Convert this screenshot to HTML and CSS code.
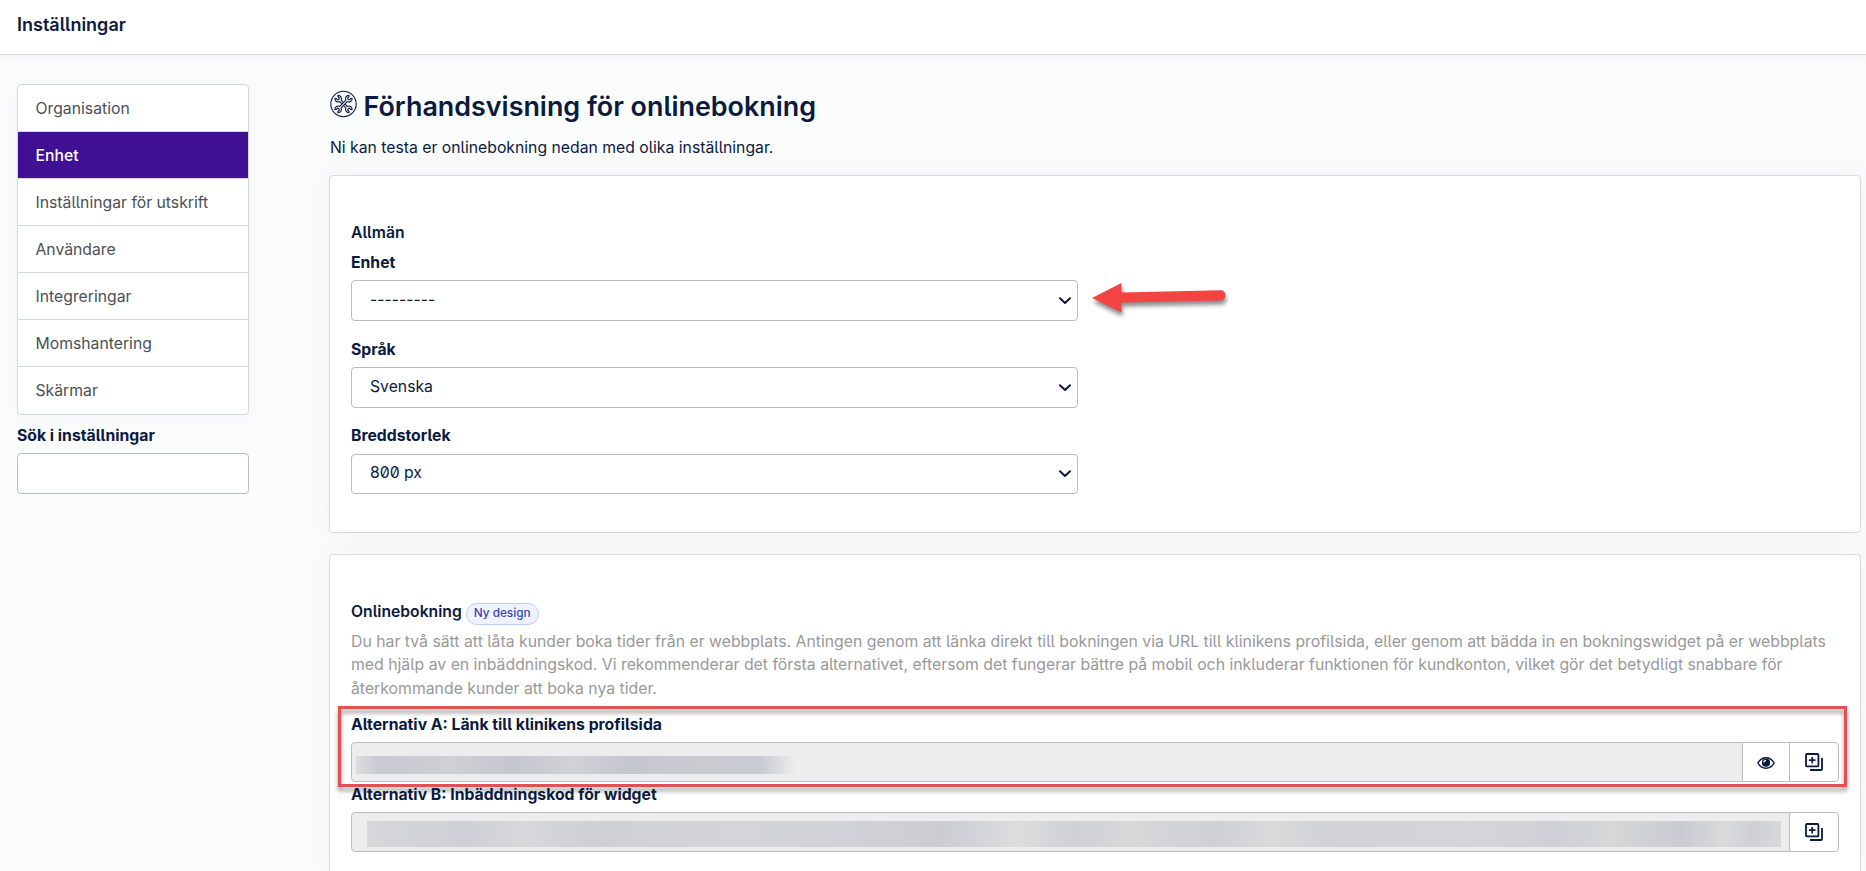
FILE: index.html
```html
<!DOCTYPE html>
<html lang="sv">
<head>
<meta charset="utf-8">
<title>Inställningar</title>
<link rel="stylesheet" href="styles.css">
</head>
<body>
<svg class="defs" aria-hidden="true">
  <symbol id="chevron" viewBox="0 0 12 8"><path d="M1 1.2 6 6 11 1.2" fill="none" stroke="currentColor" stroke-width="2" stroke-linecap="round" stroke-linejoin="round"/></symbol>
  <symbol id="copy" viewBox="0 0 18 18"><rect x="1" y="1" width="12.4" height="12.4" rx="1" fill="none" stroke="currentColor" stroke-width="1.8"/><path d="M7.2 3.9v6.6M3.900 7.200h6.600" stroke="currentColor" stroke-width="1.7" fill="none"/><path d="M17 5v11a1 1 0 0 1-1 1H5" fill="none" stroke="currentColor" stroke-width="1.8"/></symbol>
  <symbol id="eye" viewBox="0 0 18 12"><path d="M9 .8C5.200.8 2.500 3 .9 6c1.600 3 4.300 5.200 8.100 5.200S15.500 9 17.100 6C15.500 3 12.800.8 9 .8Z" fill="#fff" stroke="currentColor" stroke-width="1.500"/><circle cx="9" cy="5.700" r="4.100" fill="currentColor"/><path d="M6.900 5.500A2.100 2.100 0 0 1 9 3.400" fill="none" stroke="#fff" stroke-width="1.100"/></symbol>
  <symbol id="tools" viewBox="-13.5 -13.5 27 27">
    <g stroke="currentColor" stroke-width="1.1" stroke-linejoin="round" fill="#fbfcfc">
      <circle r="12.700"/>
      <path transform="rotate(45)" d="M-4.400-1H4.400A3.300 3.300 0 0 1 10-2.200L9.200-1.300H7.200L6.500 0 7.200 1.300H9.200L10 2.200A3.300 3.300 0 0 1 4.400 1H-4.400A3.300 3.300 0 0 1-10 2.200L-9.200 1.300H-7.200L-6.500 0-7.200-1.300H-9.200L-10-2.200A3.300 3.300 0 0 1-4.400-1Z"/>
      <path transform="rotate(-45)" d="M-4.400-1H4.400A3.300 3.300 0 0 1 10-2.200L9.200-1.300H7.200L6.500 0 7.200 1.300H9.200L10 2.200A3.300 3.300 0 0 1 4.400 1H-4.400A3.300 3.300 0 0 1-10 2.200L-9.200 1.300H-7.200L-6.500 0-7.200-1.300H-9.200L-10-2.200A3.300 3.300 0 0 1-4.400-1Z"/>
    </g>
  </symbol>
</svg>

<header class="topbar"><h1>Inställningar</h1></header>

<div class="layout">
  <aside class="sidebar">
    <nav class="menu">
      <a>Organisation</a>
      <a class="active">Enhet</a>
      <a>Inställningar för utskrift</a>
      <a>Användare</a>
      <a>Integreringar</a>
      <a>Momshantering</a>
      <a>Skärmar</a>
    </nav>
    <label class="label" for="search">Sök i inställningar</label>
    <input class="search" id="search" type="text">
  </aside>

  <main class="main">
    <h2 class="title"><svg class="title-icon"><use href="#tools"/></svg><span>Förhandsvisning för onlinebokning</span></h2>
    <p class="lead">Ni kan testa er onlinebokning nedan med olika inställningar.</p>

    <section class="card general">
      <h3 class="heading">Allmän</h3>
      <div class="field">
        <div class="label">Enhet</div>
        <div class="select"><span>---------</span><svg class="chevron"><use href="#chevron"/></svg>
          <svg class="arrow" viewBox="0 0 146 44"><path d="M4 18 33.500 3v9.600L132.500 10.200a5.100 5.100 0 0 1 0 10.200L33.500 22.600v9.900Z"/></svg>
        </div>
      </div>
      <div class="field">
        <div class="label">Språk</div>
        <div class="select"><span>Svenska</span><svg class="chevron"><use href="#chevron"/></svg></div>
      </div>
      <div class="field">
        <div class="label">Breddstorlek</div>
        <div class="select last"><span>800 px</span><svg class="chevron"><use href="#chevron"/></svg></div>
      </div>
    </section>

    <section class="card booking">
      <h3 class="heading booking-heading"><span>Onlinebokning</span><span class="badge">Ny design</span></h3>
      <p class="help">Du har två sätt att låta kunder boka tider från er webbplats. Antingen genom att länka direkt till bokningen via URL till klinikens profilsida, eller genom att bädda in en bokningswidget på er webbplats<br>med hjälp av en inbäddningskod. Vi rekommenderar det första alternativet, eftersom det fungerar bättre på mobil och inkluderar funktionen för kundkonton, vilket gör det betydligt snabbare för<br>återkommande kunder att boka nya tider.</p>
      <div class="option">
        <div class="label">Alternativ A: Länk till klinikens profilsida</div>
        <div class="group">
          <div class="value"><div class="redacted short"></div></div>
          <button class="btn view"><svg class="eye"><use href="#eye"/></svg></button>
          <button class="btn"><svg class="copy"><use href="#copy"/></svg></button>
        </div>
        <div class="highlight"></div>
      </div>
      <div class="option">
        <div class="label">Alternativ B: Inbäddningskod för widget</div>
        <div class="group">
          <div class="value"><div class="redacted long"></div></div>
          <button class="btn"><svg class="copy"><use href="#copy"/></svg></button>
        </div>
      </div>
    </section>
  </main>
</div>
</body>
</html>
```
FILE: styles.css
```css
* { box-sizing: border-box; }

body {
  margin: 0;
  height: 871px;
  overflow: hidden;
  background: #fafcfc;
  color: #0b1a3e;
  font: 400 15.75px/23.5px Inter, sans-serif;
  font-feature-settings: "cv05", "zero";
}

h1, h2, h3, p { margin: 0; }
.defs { position: absolute; width: 0; height: 0; }

.topbar {
  height: 55px;
  padding: 12px 17px;
  border-bottom: 1px solid #d5d8de;
  background: #fff;
  box-shadow: 0 2px 8px rgba(60, 70, 120, .07);
}
.topbar h1 { font-size: 18px; line-height: 25px; font-weight: 600; }

.layout { display: flex; padding: 29px 5px 0 17px; }
.sidebar { width: 232px; margin-right: 80px; flex: none; }

.menu {
  display: flex;
  flex-direction: column;
  border: 1px solid #d3d7dc;
  border-radius: 4px;
  background: #fff;
  overflow: hidden;
  box-shadow: 0 2px 16px rgba(60, 70, 120, .04);
}
.menu a {
  height: 47px;
  padding: 12px 17px 10px 17.5px;
  border-bottom: 1px solid #d3d7dc;
  color: #495057;
}
.menu a:last-child { border-bottom: 0; }
.menu .active { background: #3f0f94; color: #fff; font-weight: 500; }

.label { display: block; font-weight: 700; }
.sidebar .label { margin-top: 9px; }
.search {
  display: block;
  width: 232px;
  height: 41px;
  margin-top: 5px;
  border: 1px solid #b9bcc2;
  border-radius: 4px;
  background: #fff;
}

.main { flex: 1; min-width: 0; }
.title {
  display: flex;
  align-items: center;
  height: 36px;
  margin-top: 5px;
  font-size: 26.9px;
  font-weight: 600;
  white-space: nowrap;
}
.title-icon { width: 27px; height: 28px; margin: -6px 6.500px 0 1px; }
.lead { margin: 11px 0 15px 1px; }

.card {
  border: 1px solid #d7dade;
  border-radius: 4px;
  background: #fff;
  box-shadow: 0 0 24px rgba(60, 70, 120, .06);
  padding: 0 21px;
}
.general { height: 358px; padding-top: 45px; }
.booking {
  height: 317px;
  margin-top: 21px;
  padding-top: 45px;
  border-bottom: 0;
  border-radius: 4px 4px 0 0;
}
.heading { font-size: 15.7px; line-height: 24px; font-weight: 600; }

.field { height: 87px; padding-top: 6px; }
.field:last-child { margin-top: -.5px; }
.select {
  position: relative;
  display: flex;
  align-items: center;
  justify-content: space-between;
  width: 727px;
  height: 41px;
  margin-top: 6px;
  padding: 0 6px 1px 18px;
  border: 1px solid #b9bcc2;
  border-radius: 4px;
  background: #fff;
}
.last { height: 40px; }
.chevron { width: 12px; height: 8px; margin-top: 1px; }
.arrow {
  position: absolute;
  left: 736px;
  top: -1px;
  width: 146px;
  height: 44px;
  fill: #f44343;
  filter: drop-shadow(1px 4px 2px rgba(0, 0, 0, .45));
}

.booking-heading { display: flex; align-items: center; gap: 4px; }
.badge {
  height: 22px;
  margin-top: 3px;
  padding: 0 7px;
  border: 1px solid #c3cdf0;
  border-radius: 11px;
  background: #eff3ff;
  color: #3949ab;
  font-size: 11.8px;
  line-height: 19px;
  font-weight: 500;
}
.help {
  margin-top: 5px;
  color: #999;
  font-size: 15.81px;
  line-height: 23.7px;
  white-space: nowrap;
}

.option { position: relative; height: 70px; }
.help + .option { margin-top: 12.4px; }
.group { display: flex; height: 40px; margin-top: 5px; }
.value {
  flex: 1;
  border: 1px solid #b9bcc2;
  border-radius: 4px 0 0 4px;
  background: #ededee;
}
.btn {
  display: flex;
  align-items: center;
  justify-content: center;
  width: 50px;
  margin-left: -1px;
  padding: 0;
  border: 1px solid #b9bcc2;
  border-radius: 0 4px 4px 0;
  background: #fff;
  color: #0b1a3e;
}
.view { width: 48px; border-radius: 0; }
.eye { width: 18px; height: 12px; margin-top: 2px; }
.copy { width: 18px; height: 18px; }

.redacted { height: 18px; }
.short {
  width: 440px;
  margin: 13px 0 0 4px;
  background: linear-gradient(90deg, #dddde0, #c9cad2 5%, #cfd0d5 22%, #c5c7cf 36%, #d1d2d7 49%, #c5c7cf 62%, #cacbd1 78%, #c9cbd3 92%, #ededee);
}
.long {
  height: 26px;
  margin: 8px 8px 0 15px;
  background: linear-gradient(90deg, #d7d7da, #cfd0d5 7%, #d8d8db 11%, #cfd0d4 16%, #d5d5d9 26%, #d0d1d6 35%, #cccdd3 41%, #dddddf 46%, #d0d1d5 50%, #d8d8da 54%, #cfd0d5 60%, #dadadc 64%, #d1d2d6 68%, #d5d6d9 78%, #cfd0d5 84%, #d7d7d9 88%, #cacbd1 93%, #dadadc 96%, #ced0d5 98%, #d9d9db);
}
.highlight {
  position: absolute;
  left: -13px;
  top: -7px;
  width: 1509px;
  height: 81px;
  border: 3px solid #e15151;
  filter: drop-shadow(0 4px 2px rgba(0, 0, 0, .4));
}
```
